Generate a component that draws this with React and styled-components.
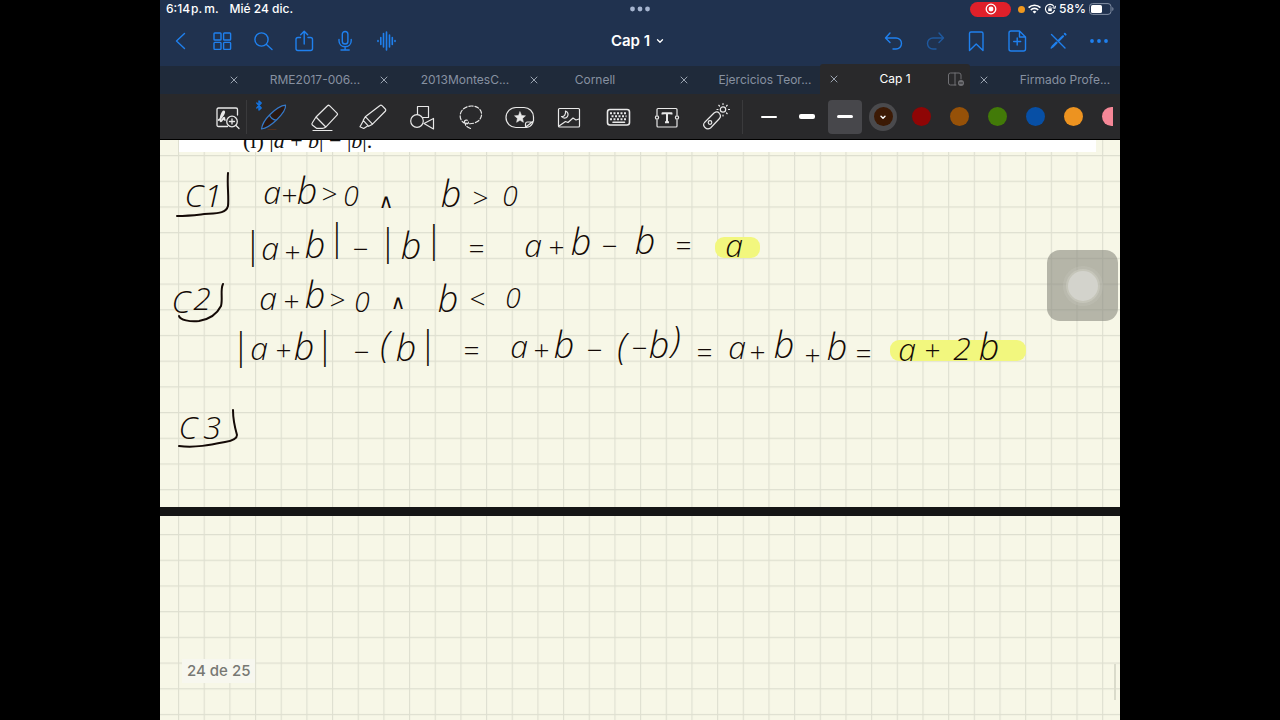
import React from 'react';
import styled, { createGlobalStyle, css } from 'styled-components';

const GlobalStyle = createGlobalStyle`
  * { box-sizing: border-box; }
  body {
    margin: 0;
    background: #000;
    font-family: Inter, "Liberation Sans", sans-serif;
  }
  button {
    margin: 0;
    padding: 0;
    border: 0;
    background: none;
    color: inherit;
    font: inherit;
  }
`;

/* ---------- frame ---------- */

const Screen = styled.div`
  width: 75%;
  min-height: 100vh;
  margin: 0 auto;
  display: flex;
  flex-direction: column;
  overflow: hidden;
  background: #151515;
`;

const Header = styled.header`
  background: #20324f;
  color: #fff;
`;

const StatusBar = styled.div`
  display: grid;
  grid-template-columns: 1fr auto 1fr;
  align-items: center;
  height: 18px;
  padding: 0 6px;
  font-size: 12px;
  font-weight: 500;
  line-height: 18px;
`;

const StatusGroup = styled.div`
  display: flex;
  align-items: center;
  height: 18px;
  gap: ${(p) => p.$gap}px;
  justify-content: ${(p) => (p.$end ? 'flex-end' : 'flex-start')};
`;

const RecordingPill = styled.span`
  display: flex;
  align-items: center;
  justify-content: center;
  width: 41px;
  height: 15px;
  margin-right: 4px;
  border-radius: 8px;
  background: #e0202a;
`;

const MicDot = styled.span`
  width: 7px;
  height: 7px;
  border-radius: 50%;
  background: #f0981e;
`;

const NavBar = styled.nav`
  display: grid;
  grid-template-columns: 1fr auto 1fr;
  align-items: center;
  height: 46px;
  padding-right: 1px;
  color: #1f80ee;
`;

const NavGroup = styled.div`
  display: flex;
  justify-content: ${(p) => (p.$end ? 'flex-end' : 'flex-start')};
`;

const NavButton = styled.button`
  display: flex;
  align-items: center;
  justify-content: center;
  width: 41px;
  height: 40px;
  opacity: ${(p) => (p.disabled ? 0.5 : 1)};
`;

const TitleButton = styled.button`
  display: flex;
  align-items: center;
  gap: 6px;
  padding-right: 4px;
  color: #fff;
  font-size: 15px;
  font-weight: 600;
  line-height: 20px;
`;

/* ---------- tabs ---------- */

const TabBar = styled.div`
  display: flex;
  align-items: flex-end;
  height: 30px;
  background: linear-gradient(#20324f 2px, #1f2a3a 2px);
`;

const Tab = styled.div`
  display: flex;
  align-items: center;
  flex: ${(p) => (p.$stub ? 2 : 5)} 1 0;
  min-width: 0;
  height: ${(p) => (p.$active ? 30 : 28)}px;
  background: ${(p) => (p.$active ? '#29292b' : 'transparent')};
  border-radius: 3px 3px 0 0;
  color: ${(p) => (p.$active ? '#fff' : '#8791a1')};
`;

const TabClose = styled.button`
  display: flex;
  align-items: center;
  justify-content: center;
  flex: none;
  width: 28px;
  height: 28px;
  color: #9aa3b0;
`;

const TabTitle = styled.button`
  flex: 1;
  min-width: 0;
  padding-left: ${(p) => (p.$long ? 20 : 0)}px;
  overflow: hidden;
  white-space: nowrap;
  text-align: center;
  font-size: 12px;
  line-height: 16px;
  ${(p) => p.$long && css`
    margin-right: -20px;
  `}
`;

const TabEnd = styled.span`
  display: flex;
  justify-content: center;
  flex: none;
  width: 28px;
`;

/* ---------- tools ---------- */

const Toolbar = styled.div`
  display: flex;
  align-items: center;
  height: 46px;
  padding: 0 7px 0 43px;
  border-bottom: 1px solid #000;
  background: #29292b;
  color: #e8e8e8;
`;

const ToolStrip = styled.div`
  display: flex;
  flex: 1;
  min-width: 0;
  overflow: hidden;
`;

const ToolGroup = styled.div`
  display: flex;
  flex: none;
  align-items: center;
`;

const ToolButton = styled.button`
  display: flex;
  align-items: center;
  justify-content: center;
  width: ${(p) => p.$width || 49}px;
  height: 36px;
`;

const Divider = styled.span`
  flex: none;
  width: 1px;
  height: 34px;
  margin: ${(p) => (p.$tight ? '0 0 0 -5px' : '0 7px 0 2px')};
  background: #3a3a3c;
`;

const WidthButton = styled.button`
  display: flex;
  align-items: center;
  justify-content: center;
  flex: none;
  width: ${(p) => (p.$selected ? 34 : 38)}px;
  height: 34px;
  margin: 0 ${(p) => (p.$selected ? 2 : 0)}px;
  border-radius: 4px;
  background: ${(p) => (p.$selected ? '#47474b' : 'transparent')};
  &::before {
    content: '';
    width: 16px;
    height: ${(p) => p.$thickness}px;
    border-radius: 2px;
    background: #fff;
  }
`;

const ColorButton = styled.button`
  display: flex;
  align-items: center;
  justify-content: center;
  flex: none;
  width: 28px;
  height: 28px;
  margin: 0 5px;
  border-radius: 50%;
  background: ${(p) => (p.$selected ? '#4a4a4d' : 'transparent')};
`;

const Swatch = styled.span`
  display: flex;
  align-items: center;
  justify-content: center;
  width: 19px;
  height: 19px;
  border-radius: 50%;
  background: ${(p) => p.$color};
`;

/* ---------- notebook ---------- */

const Notebook = styled.main`
  position: relative;
  flex: 1;
  display: flex;
  flex-direction: column;
  gap: 9px;
`;

const Sheet = styled.section`
  position: relative;
  flex: ${(p) => (p.$rest ? '1 0 204px' : '0 0 367px')};
  overflow: hidden;
  background: #f7f7e7;
`;

const GridPaper = styled.svg`
  position: absolute;
  inset: 0;
  width: 100%;
  height: 100%;
`;

const InkLayer = styled.svg`
  position: absolute;
  inset: 0;
  width: 960px;
  height: 367px;
`;

const InkText = styled.text`
  font-family: "Open Sans", "DejaVu Sans", sans-serif;
  font-style: italic;
  font-weight: 300;
  fill: #140a06;
  text-anchor: middle;
`;

const Excerpt = styled.p`
  position: relative;
  height: 12px;
  margin: 0 24px 0 19px;
  padding-left: 64px;
  overflow: hidden;
  background: #fff;
  color: #111;
  font-family: "Liberation Serif", serif;
  font-size: 22px;
  line-height: 2px;
`;

const PageCounter = styled.p`
  position: absolute;
  left: 22px;
  bottom: 37px;
  margin: 0;
  padding: 0 5px;
  background: #f7f7ef;
  color: #777873;
  font-size: 15px;
  font-weight: 500;
  line-height: 24px;
`;

const ScrollThumb = styled.span`
  position: absolute;
  right: 4px;
  bottom: 20px;
  width: 2px;
  height: 36px;
  background: #dadbcb;
`;

const AssistiveTouch = styled.button`
  position: absolute;
  top: 110px;
  right: 2px;
  display: flex;
  align-items: center;
  justify-content: center;
  width: 71px;
  height: 71px;
  border-radius: 13px;
  background: rgba(132, 132, 122, 0.58);
  &::before {
    content: '';
    width: 30px;
    height: 30px;
    border-radius: 50%;
    background: #d3d3cc;
    box-shadow: 0 0 0 2px rgba(211, 211, 200, 0.45), 0 0 0 5px rgba(211, 211, 200, 0.2);
  }
`;

/* ---------- icons ---------- */

const Icon = ({ size = 24, width = 1.4, children, ...rest }) => (
  <svg
    width={size}
    height={size}
    viewBox={`0 0 ${size} ${size}`}
    fill="none"
    stroke="currentColor"
    strokeWidth={width}
    strokeLinecap="round"
    strokeLinejoin="round"
    aria-hidden="true"
    {...rest}
  >
    {children}
  </svg>
);

const navLeft = [
  ['Atrás', <path d="M15.5 4.5 7.5 12l8 7.5" />],
  ['Miniaturas', <>
    <rect x="4" y="4" width="7" height="7" rx=".8" /><rect x="13.6" y="4" width="7" height="7" rx=".8" />
    <rect x="4" y="13.4" width="7" height="7" rx=".8" /><rect x="13.6" y="13.4" width="7" height="7" rx=".8" />
  </>],
  ['Buscar', <><circle cx="10.5" cy="10.5" r="6.6" /><path d="m15.5 15.5 5.5 5" /></>],
  ['Compartir', <><path d="M8.5 8.5H6A2 2 0 0 0 4 10.500V19.500a2 2 0 0 0 2 2h12.500a2 2 0 0 0 2-2v-9a2 2 0 0 0-2-2H16M12.200 15V2.500M8.700 5.800l3.500-3.500 3.500 3.500" /></>],
  ['Dictar', <><rect x="9.3" y="2.500" width="5.600" height="12.500" rx="2.800" /><path d="M6 10.500v1.300c0 3.500 2.500 5.900 6.100 5.900s6.100-2.400 6.100-5.900v-1.300M12.100 17.800v3M8 21h8.200" /></>],
  ['Audio', <path strokeWidth="1.6" d="M4 11.500v1M6.800 8.500v7M9.500 4.500v13.500M12.500 3v18M15.500 6v12M18.300 8.500v7M21 11.500v1" />],
];

const navRight = [
  ['Deshacer', <path d="M8 4 3.500 9 8 13.500M4 9h10a5.300 5.300 0 0 1 0 11h-3" />],
  ['Rehacer', <path d="m16 4 4.500 5-4.500 4.500M20 9H10a5.300 5.300 0 0 0 0 11h3" />],
  ['Marcador', <path d="M5.500 21.500v-17a1.500 1.500 0 0 1 1.500-1.500h10.500a1.500 1.500 0 0 1 1.500 1.500v17l-6.800-6.500z" />],
  ['Añadir página', <path d="M14.500 2H6a2 2 0 0 0-2 2v16a2 2 0 0 0 2 2h12.500a2 2 0 0 0 2-2V8zM14.500 2v6h6M12.200 9v7M8.700 12.500h7" />],
  ['Modo lectura', <><path d="m5.500 5.500 13.500 13.500" /><path strokeWidth="2" d="m18.800 4.800.8.800" /><path strokeWidth="2.200" d="m17 7.300-4 4M10.500 13.600l-4 4" /><path d="m5.200 19 .8-.8" /></>],
  ['Más', <g fill="currentColor" stroke="none"><circle cx="5" cy="12" r="1.900" /><circle cx="12" cy="12" r="1.900" /><circle cx="19" cy="12" r="1.900" /></g>],
];

const tools = [
  ['Pluma', <>
    <path stroke="#1473e0" strokeWidth="1.400" d="M.8 3 5.200 8 3 10V1l2.200 2L.8 8" />
    <g stroke="#3579c8" fill="#2a1812"><path d="M5.500 29c.5-3.500 3-9 8-14S25.500 5.500 29.500 5.200c.6 4-4.500 10.500-9 14.800S9.500 28.500 5.500 29zM13.500 15c1 2.500 3.500 4.800 6.500 5.200" /></g>
    <path stroke="#503020" d="M12 29.500h8" />
  </>],
  ['Borrador', <path d="M5.200 23 9 17 20.500 5.700q1-.9 2 0l7.500 7.500q1 1 0 2L18.500 27.300q-1.300 1-3 1H9.500L5.300 25q-.8-1-.1-2zM9 17l9.800 10M6 30.500h19" />],
  ['Resaltador', <path d="M9.300 16.700 24 5.500q1-.8 2 .2l3.300 3.300q1 1 .2 2L16.500 24.200zM9.300 16.700 7.200 20.300l5.500 6 3.800-2.100M7.300 20.800 4 26.800l3.700 1.700 4.300-2.800" />],
  ['Formas', <><rect x="12.500" y="6.500" width="11" height="11" /><circle cx="12" cy="21" r="6.300" fill="#29292b" /><path fill="#29292b" d="m19 23.500 9.500-5v10.500z" /></>],
  ['Lazo', <path strokeDasharray="4 2" d="M11.500 23.500C3 20.500 4.500 7 17 6c11.500-.5 13.500 11 6.500 15.500-4 2.500-8 2.800-11.500 1.500-2 2 1 4 4.500 5.500M10.500 22.500a2 2 0 1 1 2.500 1.500" />],
  ['Stickers', <><path d="M22 27.500H13A10 10 0 0 1 13 7.500h8a9.500 9.500 0 0 1 9.500 9.500v4zM22.500 27.500v-3.500q0-2 2-2h5.500l-.5 1.500q-2 3.500-6 4" /><path fill="currentColor" strokeWidth=".5" d="m17 11.800 1.600 3.600 3.900.4-2.900 2.600.8 3.900-3.400-2-3.400 2 .8-3.900-2.900-2.600 3.900-.4z" /></>],
  ['Imagen', <><rect x="6.500" y="8.500" width="21" height="18.500" rx="1" /><path d="M13.500 11a3.600 3.600 0 1 1-4 5.500c2.800.4 4.600-2.300 4-5.500zM7 26l6.500-4.500 2.500 1 5-4.500 3 2 3-1" /></>],
  ['Teclado', <><rect x="6.500" y="9.500" width="22" height="15.500" rx="2.500" strokeWidth="1.600" /><g strokeWidth="2" strokeLinecap="butt" strokeDasharray="2 1.500"><path d="M9 13.200h17.500M10.500 16.200h15M9 19.200h17.500" /></g><path d="M12 22.200h11.500" strokeWidth="1.600" /></>],
  ['Texto', <><path d="M7 15V9.500q0-1 1-1h18q1 0 1 1V15M7 20v6q0 1 1 1h18q1 0 1-1v-6" /><circle cx="7" cy="17.500" r="1.600" /><circle cx="27" cy="17.500" r="1.600" /><path strokeWidth="2" strokeLinecap="butt" d="M12.500 14.500v-1.200h9v1.200M17 13.300v9M15 22.300h4" /></>],
  ['Puntero láser', <><path d="M5.500 22.500 15 13q3.500-2.500 5.500.5 2 2.500 0 5L11.500 28q-3 2-5.500-.5t-.5-5z" /><circle cx="11" cy="22.500" r="1.800" /><circle cx="24" cy="9.500" r="2.700" /><path strokeDasharray="1 1.500" d="M24 4.500V3M24 16v-1.500M19 9.500h-1.500M30.500 9.500H29M20.500 6l-1-1M27.500 6l1-1M27.500 13l1 1" /></>],
];

const tabs = [
  { stub: true },
  { title: 'RME2017-006...', long: true },
  { title: '2013MontesC...', long: true },
  { title: 'Cornell' },
  { title: 'Ejercicios Teor...', long: true },
  { title: 'Cap 1', active: true },
  { title: 'Firmado Profe...', long: true },
];

const colors = ['#8f0505', '#965108', '#427a08', '#074fa5', '#ed9320', '#f58797'];

/* ---------- ink ---------- */

// Each mark: glyph, centre x, centre y.
const inkLines = [
  [['C', 194, 195], ['1', 213, 195]],
  [['a', 272, 195], ['+', 289, 195], ['b', 307, 190], ['>', 329, 194], ['0', 351, 196], ['∧', 386, 201], ['b', 451, 193], ['>', 480, 198], ['0', 510, 196]],
  [['|', 252, 249], ['a', 270, 251], ['+', 292, 252], ['b', 315, 244], ['|', 336, 241], ['−', 360, 249], ['|', 387, 246], ['b', 411, 245], ['|', 433, 243], ['=', 476, 249], ['a', 533, 248], ['+', 556, 247], ['b', 581, 241], ['−', 609, 246], ['b', 645, 240], ['=', 683, 246], ['a', 734, 248]],
  [['C', 181, 301], ['2', 202, 298]],
  [['a', 268, 301], ['+', 291, 301], ['b', 315, 294], ['>', 337, 300], ['0', 362, 302], ['∧', 398, 302], ['b', 448, 298], ['<', 477, 299], ['0', 513, 298]],
  [['|', 240, 350], ['a', 259, 351], ['+', 283, 350], ['b', 304, 346], ['|', 324, 349], ['−', 361, 352], ['(', 385, 348], ['b', 406, 347], ['|', 427, 348], ['=', 471, 351], ['a', 519, 349], ['+', 541, 350], ['b', 564, 344], ['−', 594, 350], ['(', 622, 350], ['−', 639, 348], ['b', 659, 344], [')', 676, 343], ['=', 704, 353], ['a', 737, 350], ['+', 757, 352], ['b', 784, 344], ['+', 812, 355], ['b', 837, 346], ['=', 863, 354], ['a', 907, 352], ['+', 932, 350], ['2', 962, 348], ['b', 989, 346]],
  [['C', 188, 427], ['3', 212, 427]],
];

const tall = { size: 36, drop: 0.26 };
const operator = { size: 28, drop: 0.36 };
const digit = { size: 32, drop: 0.36 };
const metrics = {
  a: { size: 32, drop: 0.27 },
  b: { size: 36, drop: 0.38 },
  C: digit,
  1: digit,
  2: digit,
  3: digit,
  '|': tall,
  '(': tall,
  ')': tall,
  '∧': { size: 20, drop: 0.36 },
};

const Handwriting = ({ marks }) => (
  <InkText>
    {marks.map(([glyph, x, y], i) => {
      const { size, drop } = metrics[glyph] || operator;
      return (
        <tspan key={i} x={x} y={Math.round(y + size * drop)} fontSize={size}>
          {glyph}
        </tspan>
      );
    })}
  </InkText>
);

const Grid = ({ id, top }) => (
  <GridPaper aria-hidden="true">
    <defs>
      <pattern id={id} x="18" y={top} width="25.670" height="25.700" patternUnits="userSpaceOnUse">
        <path d="M.6 0V25.700M0 .6H25.670" stroke="#dedfd0" strokeWidth="1.100" />
      </pattern>
    </defs>
    <rect width="100%" height="100%" fill={`url(#${id})`} />
  </GridPaper>
);

export default function App() {
  return (
    <>
      <GlobalStyle />
      <Screen>
        <Header>
          <StatusBar>
            <StatusGroup $gap={11}>
              <span>6:14{'\u200a'}p.{'\u2009'}m.</span>
              <span>Mié 24 dic.</span>
            </StatusGroup>
            <svg width="20" height="6" viewBox="0 0 20 6" fill="#a5b4cf" aria-hidden="true">
              <circle cx="2.500" cy="3" r="2.400" /><circle cx="10" cy="3" r="2.400" /><circle cx="17.500" cy="3" r="2.400" />
            </svg>
            <StatusGroup $end $gap={3}>
              <RecordingPill>
                <Icon size={12} width={1.300}><circle cx="6" cy="6" r="4.800" /><circle cx="6" cy="6" r="1.800" fill="#fff" /></Icon>
              </RecordingPill>
              <MicDot />
              <svg width="13" height="10" viewBox="0 0 13 10" fill="none" stroke="#fff" strokeWidth="1.700" aria-hidden="true">
                <path d="M.6 3.700a8.300 8.300 0 0 1 11.800 0M2.800 6a5.200 5.200 0 0 1 7.400 0" />
                <path d="M6.500 9.600 4.600 7.700a2.700 2.700 0 0 1 3.800 0z" fill="#fff" stroke="none" />
              </svg>
              <Icon size={12} width={1.100}>
                <path d="M9.800 3.300a4.600 4.600 0 1 0 .6 4.200M8.800 4.800l2.100.5.500-2" />
                <rect x="4.200" y="5.400" width="3.600" height="2.800" fill="#fff" stroke="none" /><path d="M5 5.400v-.8a1 1 0 0 1 2 0v.8" strokeWidth=".8" />
              </Icon>
              <span>58%</span>
              <svg width="25" height="12" viewBox="0 0 25 12" aria-hidden="true">
                <rect x=".5" y=".6" width="21.500" height="10.800" rx="3" fill="none" stroke="#8390a5" />
                <rect x="2" y="2" width="11" height="8" rx="1.600" fill="#fff" />
                <path d="M23.300 4v4q1.200-.6 1.200-2t-1.200-2z" fill="#8390a5" />
              </svg>
            </StatusGroup>
          </StatusBar>

          <NavBar>
            <NavGroup>
              {navLeft.map(([label, art]) => (
                <NavButton key={label} aria-label={label}><Icon>{art}</Icon></NavButton>
              ))}
            </NavGroup>
            <TitleButton>
              Cap 1
              <Icon size={8} width={1.300}><path d="M1.500 2.800 4 5.300l2.500-2.500" /></Icon>
            </TitleButton>
            <NavGroup $end>
              {navRight.map(([label, art]) => (
                <NavButton key={label} aria-label={label} disabled={label === 'Rehacer'}><Icon>{art}</Icon></NavButton>
              ))}
            </NavGroup>
          </NavBar>

          <TabBar>
            {tabs.map((tab, i) => (
              <Tab key={i} $stub={tab.stub} $active={tab.active}>
                {!tab.stub && (
                  <>
                    <TabClose aria-label={`Cerrar ${tab.title}`}>
                      <Icon size={8} width={1}><path d="m1 1 6 6M7 1 1 7" /></Icon>
                    </TabClose>
                    <TabTitle $long={tab.long}>{tab.title}</TabTitle>
                    <TabEnd>
                      {tab.active && (
                        <Icon size={18} width={1} color="#707074">
                          <path d="M9 15H3.500a2 2 0 0 1-2-2V5a2 2 0 0 1 2-2H12a2 2 0 0 1 2 2v4M8 3v12" />
                          <circle cx="14" cy="13" r="3" fill="#707074" stroke="none" /><path d="M12.500 13h3" stroke="#29292b" />
                        </Icon>
                      )}
                    </TabEnd>
                  </>
                )}
              </Tab>
            ))}
          </TabBar>
        </Header>

        <Toolbar>
          <ToolStrip>
            <ToolGroup>
              <ToolButton $width={48} aria-label="Zoom de escritura">
                <Icon size={34} width={1.300}>
                  <path d="M17.500 26.500H8.500q-1.500 0-1.500-1.500V9.500Q7 8 8.500 8h17.500q1.500 0 1.500 1.500V15" />
                  <path strokeWidth="1.700" d="M8.500 20c3.500-1.500 7-8.500 5.300-8.700-1.800 0-4 8-3.300 9.700.8 1.500 2.500-3.500 3.800-3.300.8.300-.8 2 .7 2.300" />
                  <circle cx="22" cy="21.500" r="5.300" /><path d="m26 25.500 3 3M19.500 21.500h5M22 19v5" />
                </Icon>
              </ToolButton>
              <Divider $tight />
              {tools.map(([label, art], i) => (
                <ToolButton key={label} $width={i === 0 ? 52 : 49} aria-label={label}>
                  <Icon size={34} width={1.200}>{art}</Icon>
                </ToolButton>
              ))}
              <Divider />
              <WidthButton aria-label="Trazo fino" $thickness={2} />
              <WidthButton aria-label="Trazo grueso" $thickness={5} />
              <WidthButton aria-label="Trazo medio" $thickness={3} $selected />
              <ColorButton aria-label="Color actual" $selected>
                <Swatch $color="#3c1a05">
                  <Icon size={8} width={1.400} color="#fff"><path d="M2 3.200 4 5.200l2-2" /></Icon>
                </Swatch>
              </ColorButton>
              {colors.map((color) => (
                <ColorButton key={color} aria-label={`Color ${color}`}><Swatch $color={color} /></ColorButton>
              ))}
            </ToolGroup>
          </ToolStrip>
        </Toolbar>

        <Notebook>
          <Sheet>
            <Grid id="grid-upper" top="15" />
            <Excerpt>(i) |<i>a</i> + <i>b</i>| − |<i>b</i>|.</Excerpt>
            <InkLayer viewBox="160 140 960 367">
              <g fill="#f2f77e">
                <rect x="715" y="237" width="45" height="21" rx="9" />
                <rect x="890" y="340" width="136" height="21" rx="9" />
              </g>
              <g fill="none" stroke="#140a06" strokeWidth="2" strokeLinecap="round">
                <path d="M228 173c-1 12 1 24 0 33-2 8-12 7-27 8.500-9 1-16 1.500-24 1.500" />
                <path d="M223 284c-3 6 0 14-2 22-4 8-10 13-22 15-9 1-19-1-20-5" />
                <path d="M233 410c0 10 2 18 4 25 0 4-6 6-12 7-15 3-30 6-46 4" />
              </g>
              {inkLines.map((marks, i) => <Handwriting key={i} marks={marks} />)}
            </InkLayer>
          </Sheet>
          <Sheet $rest>
            <Grid id="grid-lower" top="18" />
            <PageCounter>24 de 25</PageCounter>
            <ScrollThumb />
          </Sheet>
          <AssistiveTouch aria-label="AssistiveTouch" />
        </Notebook>
      </Screen>
    </>
  );
}
